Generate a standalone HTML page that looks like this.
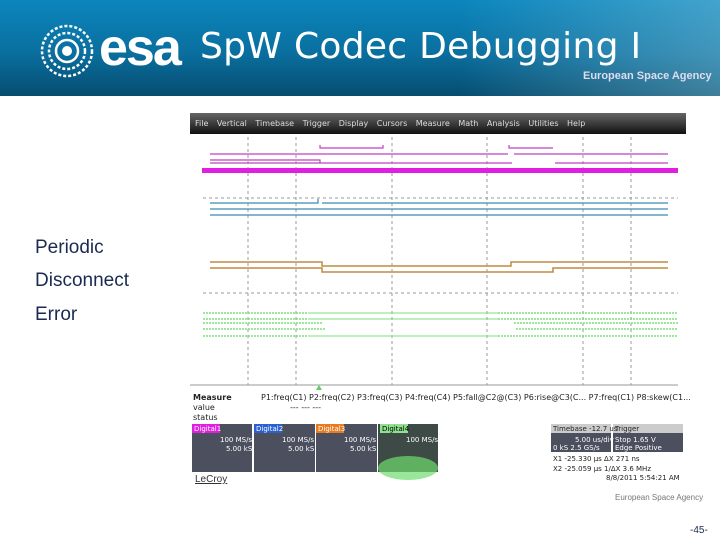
<!DOCTYPE html><html><head><style>
body{margin:0;width:720px;height:540px;overflow:hidden;background:#fff;font-family:"Liberation Sans",sans-serif;position:relative}
.hdr{position:absolute;left:0;top:0;width:720px;height:96px;background:linear-gradient(180deg,#0b86bd 0%,#0a6f9f 55%,#064d70 100%)}
.t{position:absolute;color:#fff}
.lbl{position:absolute;left:35px;font-size:19px;color:#1a2a50}
.s{font-family:"DejaVu Sans",sans-serif;font-size:8px;fill:#222}
</style></head><body>
<div class="hdr">
<div style="position:absolute;right:0;top:0;width:260px;height:96px;background:linear-gradient(90deg,rgba(255,255,255,0),rgba(170,220,235,.35))"></div>
<svg style="position:absolute;left:38px;top:22px" width="58" height="58"><g fill="none" stroke="#fff" stroke-width="2.5"><circle cx="29" cy="29" r="25" stroke-dasharray="3 2"/><circle cx="29" cy="29" r="18" stroke-dasharray="3 2"/><circle cx="29" cy="29" r="11"/></g><circle cx="29" cy="29" r="5" fill="#fff"/></svg>
<div class="t" style="left:99px;top:18px;font-size:52px;font-weight:bold;letter-spacing:-2px">esa</div>
<div class="t" style="left:200px;top:26px;font-size:36px;font-family:'DejaVu Sans',sans-serif;letter-spacing:0.3px">SpW Codec Debugging I</div>
<div class="t" style="left:583px;top:70px;font-size:11px;font-weight:bold;color:#dde">European Space Agency</div>
</div>
<div class="lbl" style="top:237px">Periodic</div>
<div class="lbl" style="top:270px">Disconnect</div>
<div class="lbl" style="top:304px">Error</div>
<svg style="position:absolute;left:0;top:0" width="720" height="540">
<defs><linearGradient id="m" x1="0" y1="0" x2="0" y2="1"><stop offset="0" stop-color="#666"/><stop offset="1" stop-color="#111"/></linearGradient></defs>
<rect x="190" y="113" width="496" height="21" fill="url(#m)"/>
<text x="195" y="126" font-size="8" fill="#ddd" font-family="DejaVu Sans" word-spacing="6">File Vertical Timebase Trigger Display Cursors Measure Math Analysis Utilities Help</text>
<g stroke="#999" stroke-dasharray="3 3" stroke-width="1">
<line x1="248" y1="137" x2="248" y2="385"/><line x1="296" y1="137" x2="296" y2="385"/><line x1="392" y1="137" x2="392" y2="385"/><line x1="487" y1="137" x2="487" y2="385"/><line x1="583" y1="137" x2="583" y2="385"/><line x1="631" y1="137" x2="631" y2="385"/>
<line x1="203" y1="198" x2="678" y2="198"/><line x1="203" y1="293" x2="678" y2="293"/></g>
<line x1="190" y1="385" x2="678" y2="385" stroke="#999"/>
<g stroke="#c040c0" fill="none" stroke-width="1.2"><path d="M320 145V148H383V145"/><path d="M509 145V148H553"/><path d="M210 154H508M514 154H668"/><path d="M210 160H320V163H512"/><path d="M210 163H320M555 163H668"/></g>
<rect x="202" y="168" width="476" height="5" fill="#e020e0"/>
<g stroke="#3a8ab0" stroke-width="1.2" fill="none"><path d="M210 203H318V199M322 203H668"/><path d="M210 209H668"/><path d="M210 215H668"/></g>
<g stroke="#c08a40" stroke-width="1.5" fill="none"><path d="M210 262H322V266H511V262H668"/><path d="M210 268H322V272H553V268H668"/></g>
<g stroke="#7ee07e" stroke-width="1.5" fill="none" stroke-dasharray="2 1"><path d="M203 313H308M498 313H678"/><path d="M203 319H308M498 319H678"/><path d="M203 323H323M514 323H678"/><path d="M203 329H326M516 329H678"/><path d="M203 336H308M498 336H678"/></g>
<g stroke="#7ee07e" stroke-width="1" fill="none"><path d="M308 313H498M308 319H498M308 336H498"/></g>
<polygon points="316,390 319,385 322,390" fill="#6c6"/>
<text class="s" x="193" y="400" font-weight="bold">Measure</text><text class="s" x="193" y="410">value</text><text class="s" x="193" y="420">status</text>
<text class="s" x="261" y="400">P1:freq(C1)   P2:freq(C2)    P3:freq(C3)    P4:freq(C4) P5:fall@C2@(C3) P6:rise@C3(C...     P7:freq(C1) P8:skew(C1...</text>
<text class="s" x="290" y="410">---            ---           ---</text>
<g><rect x="192" y="424" width="60" height="48" fill="#4b4f5e"/><rect x="254" y="424" width="61" height="48" fill="#4b4f5e"/><rect x="316" y="424" width="61" height="48" fill="#4b4f5e"/><rect x="378" y="424" width="60" height="48" fill="#3d4a45"/>
<ellipse cx="408" cy="468" rx="30" ry="12" fill="#6fdc6f" opacity=".7"/>
<rect x="192" y="424" width="28" height="9" fill="#e020e0"/><rect x="254" y="424" width="28" height="9" fill="#2a60d0"/><rect x="316" y="424" width="28" height="9" fill="#e87a20"/><rect x="380" y="424" width="28" height="9" fill="#8fe08f"/>
<rect x="551" y="424" width="60" height="28" fill="#4b4f5e"/><rect x="613" y="424" width="70" height="28" fill="#4b4f5e"/><rect x="551" y="424" width="60" height="9" fill="#ccc"/><rect x="613" y="424" width="70" height="9" fill="#ccc"/></g>
<g font-size="7" fill="#fff" font-family="DejaVu Sans"><text x="194" y="431">Digital1</text><text x="256" y="431">Digital2</text><text x="318" y="431">Digital3</text><text x="382" y="431" fill="#000">Digital4</text>
<text x="220" y="442">100 MS/s</text><text x="282" y="442">100 MS/s</text><text x="344" y="442">100 MS/s</text><text x="406" y="442">100 MS/s</text>
<text x="226" y="451">5.00 kS</text><text x="288" y="451">5.00 kS</text><text x="350" y="451">5.00 kS</text>
<text x="575" y="442">5.00 us/div</text><text x="553" y="450">0 kS  2.5 GS/s</text><text x="615" y="442">Stop    1.65 V</text><text x="615" y="450">Edge  Positive</text></g>
<g font-size="7" fill="#222" font-family="DejaVu Sans"><text x="553" y="431">Timebase -12.7 us</text><text x="615" y="431">Trigger</text><text x="553" y="461">X1  -25.330 µs   ΔX   271 ns</text><text x="553" y="471">X2  -25.059 µs  1/ΔX  3.6 MHz</text><text x="606" y="480">8/8/2011 5:54:21 AM</text></g>
<text x="195" y="482" font-size="10" fill="#333" text-decoration="underline">LeCroy</text>
<text x="615" y="500" font-size="8" fill="#777">European Space Agency</text>
<text x="690" y="533" font-size="10" fill="#1a2a50">-45-</text>
</svg>
</body></html>
